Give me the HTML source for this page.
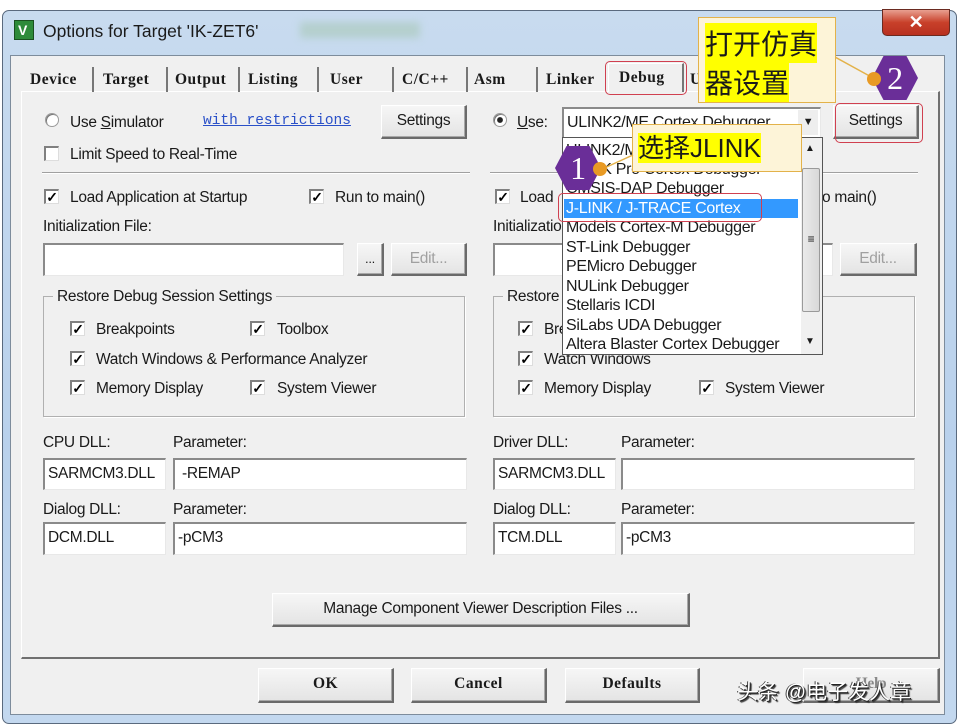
<!DOCTYPE html>
<html><head><meta charset="utf-8"><style>
*{margin:0;padding:0;box-sizing:border-box}
body{width:963px;height:726px;background:#fff;position:relative;overflow:hidden;font-family:"Liberation Sans",Arial,sans-serif;font-size:15.5px;color:#1a1a1a;letter-spacing:-0.3px}
.a{position:absolute;white-space:nowrap}
.t{position:absolute;white-space:nowrap;line-height:18px;margin-top:2px}
.btn{position:absolute;background:linear-gradient(#f6f6f6,#e4e4e4);border:1px solid #fff;border-right:2px solid #6a6a6a;border-bottom:2px solid #6a6a6a;box-shadow:inset -1px -1px 0 #a8a8a8;text-align:center;line-height:30px}
.in{position:absolute;background:#fff;border-top:2px solid #8a8a8a;border-left:2px solid #8a8a8a;border-right:1px solid #e8e8e8;border-bottom:1px solid #e8e8e8;padding-left:3px;line-height:28px}
.cb{position:absolute;width:15px;height:15px;background:#fff;border-top:2px solid #808080;border-left:2px solid #808080;border-right:1px solid #ddd;border-bottom:1px solid #ddd;font-size:14px;line-height:12px;text-align:center;font-weight:900;color:#000}
.rd{position:absolute;width:14px;height:14px;border-radius:50%;background:#fff;border:1px solid #9a9a9a;box-shadow:inset 1px 1px 0 #777}
.tab{position:absolute;top:67px;height:25px;font-family:"Liberation Serif",serif;font-weight:bold;font-size:15.5px;letter-spacing:0.5px;line-height:25px;border-right:2px solid #777}
.grp{position:absolute;border:1px solid #b0b0b0;box-shadow:1px 1px 0 #fff}
.li{position:absolute;left:566px;height:19.6px;line-height:19.6px;font-size:16px}
.hex{position:absolute;width:46px;height:44px;background:#6a2e98;clip-path:polygon(25% 0,75% 0,100% 50%,75% 100%,25% 100%,0 50%);color:#fff;font-family:"Liberation Serif",serif;font-size:32px;text-align:center;line-height:44px}
.dot{position:absolute;width:14px;height:14px;border-radius:50%;background:#e89a24}
.call{position:absolute;background:#fdf4d8;border:1px solid #e3b24a}
.hl{background:#ffff00}
.red{position:absolute;border:1.5px solid #d04050;border-radius:5px}
</style></head><body>
<div class="a" style="left:2px;top:10px;width:955px;height:714px;border-radius:7px;background:linear-gradient(#c8dbef,#b9d1ec 60%,#c3d8ef);border:1px solid #5a6a7e"></div>
<div class="a" style="left:14px;top:20px;width:20px;height:20px;background:#2e8b3a;border:1px solid #1a5020"></div>
<div class="a" style="left:18px;top:22px;color:#fff;font-weight:bold;font-size:14px">V</div>
<div class="t" style="left:43px;top:20px;font-size:17.5px;letter-spacing:0">Options for Target 'IK-ZET6'</div>
<div class="a" style="left:300px;top:22px;width:120px;height:16px;background:#a8c8b8;filter:blur(4px);opacity:.6"></div>
<div class="a" style="left:882px;top:9px;width:68px;height:27px;border-radius:0 0 5px 5px;background:linear-gradient(#e8a090,#c8402a 50%,#b83020);border:1px solid #6a2a20;color:#fff;text-align:center;font-weight:bold;font-size:18px;line-height:24px">✕</div>
<div class="a" style="left:10px;top:55px;width:935px;height:660px;background:#f0f0f0;border:1px solid #7d8c9c"></div>
<div class="a" style="left:21px;top:91px;width:919px;height:568px;border:1px solid #fff;border-right:2px solid #707070;border-bottom:2px solid #707070"></div>
<div class="tab" style="left:22px;width:72px;padding-left:8px">Device</div>
<div class="tab" style="left:96px;width:72px;padding-left:7px">Target</div>
<div class="tab" style="left:170px;width:70px;padding-left:5px">Output</div>
<div class="tab" style="left:242px;width:77px;padding-left:6px">Listing</div>
<div class="tab" style="left:322px;width:72px;padding-left:8px">User</div>
<div class="tab" style="left:398px;width:70px;padding-left:4px">C/C++</div>
<div class="tab" style="left:470px;width:68px;padding-left:4px">Asm</div>
<div class="tab" style="left:540px;width:66px;padding-left:6px;border:none">Linker</div>
<div class="tab" style="left:608px;top:63px;height:29px;width:76px;padding-left:10px;background:#f0f0f0;border:1px solid #fff;border-right:2px solid #777;border-bottom:none;line-height:27px">Debug</div>
<div class="tab" style="left:690px;width:20px;border:none">U</div>
<div class="red" style="left:605px;top:61px;width:82px;height:34px"></div>
<div class="rd" style="left:45px;top:113px"></div>
<div class="t" style="left:70px;top:112px">Use <u>S</u>imulator</div>
<div class="t" style="left:203px;top:110px;color:#2a50c8;font-family:'Liberation Mono',monospace;font-size:14.5px;letter-spacing:0;text-decoration:underline">with restrictions</div>
<div class="btn" style="left:381px;top:105px;width:86px;height:34px">Settings</div>
<div class="cb" style="left:44px;top:146px"></div>
<div class="t" style="left:70px;top:144px">Limit Speed to Real-Time</div>
<div class="a" style="left:42px;top:172px;width:428px;height:2px;border-top:1px solid #a0a0a0;border-bottom:1px solid #fff"></div>
<div class="cb" style="left:44px;top:189px">✓</div>
<div class="t" style="left:70px;top:187px">Load Application at Startup</div>
<div class="cb" style="left:309px;top:189px">✓</div>
<div class="t" style="left:335px;top:187px">Run to main()</div>
<div class="t" style="left:43px;top:216px">Initialization File:</div>
<div class="in" style="left:43px;top:243px;width:301px;height:33px"></div>
<div class="btn" style="left:357px;top:243px;width:27px;height:33px;font-size:13px">...</div>
<div class="btn" style="left:391px;top:243px;width:76px;height:33px;color:#a0a0a0">Edit...</div>
<div class="grp" style="left:43px;top:296px;width:422px;height:121px"></div>
<div class="t" style="left:53px;top:286px;background:#f0f0f0;padding:0 4px">Restore Debug Session Settings</div>
<div class="cb" style="left:70px;top:321px">✓</div><div class="t" style="left:96px;top:319px">Breakpoints</div>
<div class="cb" style="left:250px;top:321px">✓</div><div class="t" style="left:277px;top:319px">Toolbox</div>
<div class="cb" style="left:70px;top:351px">✓</div><div class="t" style="left:96px;top:349px">Watch Windows &amp; Performance Analyzer</div>
<div class="cb" style="left:70px;top:380px">✓</div><div class="t" style="left:96px;top:378px">Memory Display</div>
<div class="cb" style="left:250px;top:380px">✓</div><div class="t" style="left:277px;top:378px">System Viewer</div>
<div class="t" style="left:43px;top:432px">CPU DLL:</div><div class="t" style="left:173px;top:432px">Parameter:</div>
<div class="in" style="left:43px;top:458px;width:123px;height:32px">SARMCM3.DLL</div>
<div class="in" style="left:173px;top:458px;width:294px;height:32px">&nbsp;-REMAP</div>
<div class="t" style="left:43px;top:499px">Dialog DLL:</div><div class="t" style="left:173px;top:499px">Parameter:</div>
<div class="in" style="left:43px;top:522px;width:123px;height:33px">DCM.DLL</div>
<div class="in" style="left:173px;top:522px;width:294px;height:33px">-pCM3</div>
<div class="rd" style="left:493px;top:113px;background:radial-gradient(#222 30%,#fff 38%)"></div>
<div class="t" style="left:517px;top:112px"><u>U</u>se:</div>
<div class="in" style="left:562px;top:107px;width:259px;height:31px;font-size:16px">ULINK2/ME Cortex Debugger</div>
<div class="a" style="left:798px;top:110px;width:20px;height:25px;background:#eee;text-align:center;font-size:11px;line-height:25px">▼</div>
<div class="btn" style="left:833px;top:105px;width:86px;height:34px">Settings</div>
<div class="red" style="left:835px;top:103px;width:88px;height:40px"></div>
<div class="a" style="left:490px;top:172px;width:428px;height:2px;border-top:1px solid #a0a0a0;border-bottom:1px solid #fff"></div>
<div class="cb" style="left:495px;top:189px">✓</div><div class="t" style="left:520px;top:187px">Load</div>
<div class="t" style="left:822px;top:187px">o main()</div>
<div class="t" style="left:493px;top:216px">Initializatio</div>
<div class="in" style="left:493px;top:243px;width:340px;height:33px"></div>
<div class="btn" style="left:840px;top:243px;width:77px;height:33px;color:#a0a0a0">Edit...</div>
<div class="grp" style="left:493px;top:296px;width:422px;height:121px"></div>
<div class="t" style="left:503px;top:286px;background:#f0f0f0;padding:0 4px">Restore</div>
<div class="cb" style="left:518px;top:321px">✓</div><div class="t" style="left:544px;top:319px">Bre</div>
<div class="cb" style="left:518px;top:351px">✓</div><div class="t" style="left:544px;top:349px">Watch Windows</div>
<div class="cb" style="left:518px;top:380px">✓</div><div class="t" style="left:544px;top:378px">Memory Display</div>
<div class="cb" style="left:699px;top:380px">✓</div><div class="t" style="left:725px;top:378px">System Viewer</div>
<div class="t" style="left:493px;top:432px">Driver DLL:</div><div class="t" style="left:621px;top:432px">Parameter:</div>
<div class="in" style="left:493px;top:458px;width:123px;height:32px">SARMCM3.DLL</div>
<div class="in" style="left:621px;top:458px;width:294px;height:32px"></div>
<div class="t" style="left:493px;top:499px">Dialog DLL:</div><div class="t" style="left:621px;top:499px">Parameter:</div>
<div class="in" style="left:493px;top:522px;width:123px;height:33px">TCM.DLL</div>
<div class="in" style="left:621px;top:522px;width:294px;height:33px">-pCM3</div>
<div class="a" style="left:562px;top:137px;width:261px;height:218px;background:#fff;border:1px solid #555"></div>
<div class="a" style="left:801px;top:138px;width:21px;height:216px;background:#f0f0f0"></div>
<div class="a" style="left:802px;top:168px;width:18px;height:144px;background:linear-gradient(90deg,#eaeaea,#d8d8d8);border:1px solid #9a9a9a;border-radius:2px;text-align:center;font-size:12px;line-height:140px">≡</div>
<div class="a" style="left:805px;top:143px;font-size:10px">▲</div>
<div class="a" style="left:805px;top:336px;font-size:10px">▼</div>
<div class="li" style="top:141px">ULINK2/ME Cortex Debugger</div>
<div class="li" style="top:160px">ULINK Pro Cortex Debugger</div>
<div class="li" style="top:179px">CMSIS-DAP Debugger</div>
<div class="a" style="left:564px;top:199px;width:234px;height:19px;background:#3399ff"></div>
<div class="li" style="top:199px;color:#fff">J-LINK / J-TRACE Cortex</div>
<div class="li" style="top:218px">Models Cortex-M Debugger</div>
<div class="li" style="top:238px">ST-Link Debugger</div>
<div class="li" style="top:257px">PEMicro Debugger</div>
<div class="li" style="top:277px">NULink Debugger</div>
<div class="li" style="top:296px">Stellaris ICDI</div>
<div class="li" style="top:316px">SiLabs UDA Debugger</div>
<div class="li" style="top:335px">Altera Blaster Cortex Debugger</div>
<div class="red" style="left:558px;top:193px;width:204px;height:29px"></div>
<div class="call" style="left:632px;top:124px;width:170px;height:48px"></div>
<div class="a" style="left:638px;top:132px;font-family:'Liberation Sans','Noto Sans CJK SC',sans-serif;font-size:26px;line-height:33px;letter-spacing:0"><span class="hl">选择JLINK</span></div>
<svg class="a" style="left:590px;top:155px" width="50" height="25"><line x1="10" y1="15" x2="43" y2="0" stroke="#e3b24a" stroke-width="1.5"/></svg>
<div class="hex" style="left:555px;top:146px">1</div>
<div class="dot" style="left:593px;top:162px"></div>
<div class="call" style="left:698px;top:17px;width:138px;height:86px"></div>
<div class="a" style="left:705px;top:24px;font-family:'Noto Sans CJK SC',sans-serif;font-size:28px;line-height:39px;letter-spacing:0"><span class="hl">打开仿真</span><br><span class="hl">器设置</span></div>
<svg class="a" style="left:835px;top:55px" width="45" height="30"><line x1="0" y1="2" x2="40" y2="24" stroke="#e3b24a" stroke-width="1.5"/></svg>
<div class="hex" style="left:872px;top:56px">2</div>
<div class="dot" style="left:867px;top:72px"></div>
<div class="btn" style="left:272px;top:593px;width:418px;height:34px">Manage Component Viewer Description Files ...</div>
<div class="btn" style="left:258px;top:668px;width:136px;height:35px;font-family:'Liberation Serif',serif;font-weight:bold;font-size:15.5px;letter-spacing:0.5px">OK</div>
<div class="btn" style="left:411px;top:668px;width:136px;height:35px;font-family:'Liberation Serif',serif;font-weight:bold;font-size:15.5px;letter-spacing:0.5px">Cancel</div>
<div class="btn" style="left:565px;top:668px;width:135px;height:35px;font-family:'Liberation Serif',serif;font-weight:bold;font-size:15.5px;letter-spacing:0.5px">Defaults</div>
<div class="btn" style="left:803px;top:668px;width:137px;height:35px;font-family:'Liberation Serif',serif;font-weight:bold;font-size:15.5px;color:#888">Help</div>
<div class="a" style="left:737px;top:676px;font-family:'Liberation Sans','Noto Sans CJK SC',sans-serif;font-size:21px;letter-spacing:0;color:#fff;text-shadow:1px 1px 0 #222,2px 2px 1px #333,-1px 0 0 #444">头条 @电子发人章</div>
</body></html>
